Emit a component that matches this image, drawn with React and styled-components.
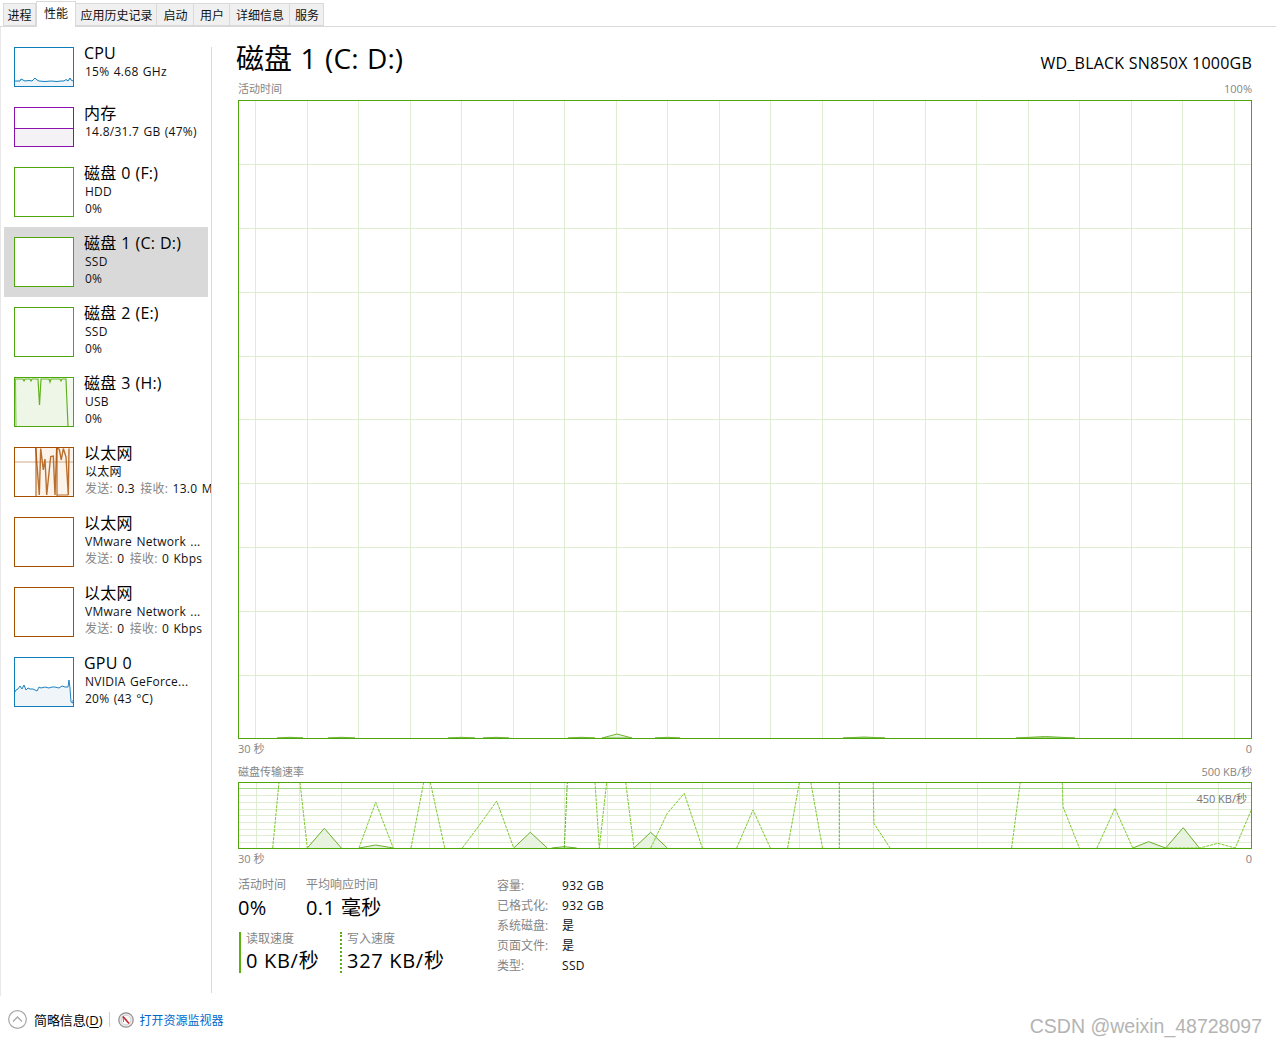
import React from 'react';
import styled, { createGlobalStyle } from 'styled-components';

const FONT = '"Open Sans", "Noto Sans CJK SC", sans-serif';

const Global = createGlobalStyle`
  html, body { margin: 0; padding: 0; background: #fff; }
  body { font-family: ${FONT}; color: #000; }
  * { box-sizing: border-box; }
`;

const Page = styled.div`
  position: relative;
  width: 1276px;
  height: 1045px;
  display: flex;
  flex-direction: column;
  overflow: hidden;
  background: #fff;
`;

const TabBar = styled.div`
  height: 27px;
  flex: none;
  display: flex;
  align-items: flex-end;
  padding-left: 3px;
  border-bottom: 1px solid #d9d9d9;
`;

const Tab = styled.div`
  width: ${p => p.$w}px;
  height: ${p => (p.$active ? 26 : 23)}px;
  margin-bottom: ${p => (p.$active ? -1 : 0)}px;
  padding-bottom: ${p => (p.$active ? 4 : 0)}px;
  padding-left: ${p => (p.$first || p.$active ? 0 : 1)}px;
  display: flex;
  align-items: center;
  justify-content: center;
  font-size: 12px;
  color: #111;
  white-space: nowrap;
  background: ${p => (p.$active ? '#fff' : '#f0f0f0')};
  border: 1px solid #d9d9d9;
  border-left-width: ${p => (p.$first || p.$active ? 1 : 0)}px;
  border-bottom-width: ${p => (p.$active ? 0 : 1)}px;
`;

const Body = styled.div`
  height: 969px;
  flex: none;
  display: flex;
  border-left: 1px solid #e8e8e8;
`;

const SideList = styled.div`
  width: 210px;
  flex: none;
  padding: 10px 0 0 3px;
  overflow: hidden;
`;

const SideItem = styled.div`
  width: 204px;
  height: ${p => (p.$short ? 60 : 70)}px;
  padding: 10px 0 0 10px;
  display: flex;
  gap: 10px;
  background: ${p => (p.$selected ? '#d9d9d9' : 'transparent')};
`;

const ThumbFrame = styled.div`
  width: 60px;
  height: ${p => (p.$short ? 40 : 50)}px;
  flex: none;
  border: 1px solid ${p => p.$color};
  background: #fff;
`;

const Svg = styled.svg`
  display: block;
  width: 100%;
  height: 100%;
`;

const SideText = styled.div`
  margin-top: -4px;
  min-width: 0;
  white-space: nowrap;
`;

const SideTitle = styled.div`
  font-size: 16px;
  line-height: 20px;
  letter-spacing: 0.2px;
  word-spacing: 0.5px;
  color: #000;
`;

const SideSub = styled.div`
  font-size: 12px;
  line-height: 17px;
  padding-left: 1px;
  letter-spacing: 0.25px;
  word-spacing: 1px;
  color: #111;
`;

const Muted = styled.span`
  color: #858585;
`;

const NetRecv = styled(Muted)`
  margin-left: 1px;
`;

const Divider = styled.div`
  width: 1px;
  height: 946px;
  margin-top: 20px;
  flex: none;
  background: #d9d9d9;
`;

const Main = styled.div`
  flex: 1;
  min-width: 0;
  padding: 15px 24px 0 26px;
  display: flex;
  flex-direction: column;
`;

const HeadRow = styled.div`
  height: 32px;
  display: flex;
  justify-content: space-between;
  align-items: flex-end;
`;

const BigTitle = styled.div`
  margin-left: -2px;
  font-size: 28px;
  line-height: 32px;
  letter-spacing: 0.1px;
  word-spacing: 1px;
  color: #000;
  white-space: nowrap;
`;

const Model = styled.div`
  font-size: 16px;
  line-height: 24px;
  margin-bottom: -1px;
  letter-spacing: 0.23px;
  color: #000;
`;

const CaptionRow = styled.div`
  height: ${p => p.$h || 16}px;
  margin-top: ${p => p.$top}px;
  display: flex;
  justify-content: space-between;
  align-items: center;
  font-size: 11px;
  color: #858585;
  white-space: nowrap;
`;

const ChartFrame = styled.div`
  position: relative;
  height: ${p => p.$h}px;
  margin-top: ${p => p.$top}px;
  border: 1px solid #4da60c;
`;

const ScaleTag = styled.div`
  position: absolute;
  top: 9px;
  right: 4px;
  font-size: 11px;
  line-height: 14px;
  color: #777;
`;

const Stats = styled.div`
  margin-top: 10px;
  display: flex;
`;

const StatCol = styled.div`
  width: 259px;
  flex: none;
  padding-top: 3px;
`;

const StatRow = styled.div`
  display: flex;
`;

const Stat = styled.div`
  width: ${p => p.$w}px;
  flex: none;
`;

const StatLabel = styled.div`
  font-size: 12px;
  line-height: 14px;
  color: #858585;
  white-space: nowrap;
`;

const StatValue = styled.div`
  margin-top: 2px;
  font-size: 20px;
  line-height: 28px;
  letter-spacing: 0.4px;
  color: #000;
  white-space: nowrap;
`;

const SpeedRow = styled.div`
  display: flex;
  margin: 10px 0 0 1px;
`;

const Speed = styled.div`
  width: ${p => p.$w}px;
  height: 41px;
  flex: none;
  padding-left: 5px;
  border-left: 2px ${p => p.$style} #5cb010;
`;

const SpeedValue = styled(StatValue)`
  margin-top: 2px;
  line-height: 26px;
  letter-spacing: 0.7px;
`;

const Facts = styled.div`
  display: grid;
  grid-template-columns: 65px auto;
  grid-auto-rows: 20px;
  align-items: center;
  font-size: 12px;
  letter-spacing: 0.3px;
  white-space: nowrap;
`;

const FactLabel = styled(Muted)`
  letter-spacing: 0;
`;

const FactValue = styled.div`
  color: #111;
`;

const Footer = styled.div`
  flex: 1;
  display: flex;
  align-items: center;
  padding: 0 0 2px 8px;
  font-size: 12px;
`;

const FooterIcon = styled.svg`
  display: block;
  flex: none;
`;

const FooterLabel = styled.div`
  margin-left: 7px;
  font-size: 13px;
  color: #000;
  letter-spacing: -0.1px;
  white-space: nowrap;
  u { text-underline-offset: 2px; }
`;

const FooterSep = styled.div`
  width: 1px;
  height: 15px;
  margin: 0 8px 0 7px;
  background: #cfcfcf;
`;

const FooterLink = styled.div`
  margin-left: 5px;
  color: #0066cc;
  white-space: nowrap;
`;

const Watermark = styled.div`
  position: absolute;
  right: 14px;
  bottom: 7px;
  font-family: "Liberation Sans", sans-serif;
  font-size: 19.5px;
  line-height: 24px;
  color: #b4b4b4;
`;

const GRID = '#dfeed3';
const DISK = '#4da60c';
const DASH = '#7cc92c';

function ThumbArt({ kind }) {
  if (kind === 'cpu') {
    return (
      <Svg viewBox="0 0 58 38" preserveAspectRatio="none">
        <polygon fill="#eef5fa" points="0,38 0,33 5,33 6,31 8,32 10,33 14,32.5 17,33 20,30 22,32 24,33 30,33.5 36,33 42,33.5 46,33 49,33 51,31.5 53,33 55,30 56,32 58,33 58,38" />
        <polyline fill="none" stroke="#117dbb" strokeWidth="1" points="0,33 5,33 6,31 8,32 10,33 14,32.5 17,33 20,30 22,32 24,33 30,33.5 36,33 42,33.5 46,33 49,33 51,31.5 53,33 55,30 56,32 58,33" />
      </Svg>
    );
  }
  if (kind === 'mem') {
    return (
      <Svg viewBox="0 0 58 38" preserveAspectRatio="none">
        <rect x="0" y="20.5" width="58" height="18" fill="#f4f2f4" />
        <line x1="0" x2="58" y1="20.5" y2="20.5" stroke="#8b12ae" strokeWidth="1" />
      </Svg>
    );
  }
  if (kind === 'usb') {
    const pts = '0,1 8,1 9,3 10,1 15,1 16,3 17,1 23,1 24.5,27 26,1 34,1 35,4 36,1 45,1 46,3 47,1 51,1 53,48';
    return (
      <Svg viewBox="0 0 58 48" preserveAspectRatio="none">
        <polygon fill="#eef6e8" points={`0,48 ${pts} 58,48`} />
        <polygon fill="#f2f8ed" points="53,48 53,1 58,1 58,48" />
        <polyline fill="none" stroke="#5fb31e" strokeWidth="1.2" points={pts} />
        <line x1="0.5" x2="1" y1="1" y2="48" stroke="#7fc24c" strokeWidth="1" />
      </Svg>
    );
  }
  if (kind === 'net') {
    const pts = '20.7,0 24.3,47 25.7,0.5 28.3,22 30,11 31.7,47 34.3,22 35.7,8.5 38.3,8 40,47 41.7,0 42.3,0 44.3,1.5 46.3,12 48.3,0.5 51,9 53.3,47 54,0.5';
    return (
      <Svg viewBox="0 0 58 48" preserveAspectRatio="none">
        <rect x="21" y="0" width="37" height="48" fill="#fcf3eb" />
        <line x1="0" x2="58" y1="14" y2="14" stroke="#d2a882" strokeWidth="1" />
        <polyline fill="none" stroke="#b96f2e" strokeWidth="1.4" points={pts} />
        <polyline fill="none" stroke="#b96f2e" strokeWidth="1" points="42.3,47 53.3,47" />
        <line x1="21" x2="21" y1="0" y2="48" stroke="#a74f01" strokeWidth="1" />
        <line x1="42" x2="42" y1="0" y2="48" stroke="#a74f01" strokeWidth="1" />
      </Svg>
    );
  }
  if (kind === 'gpu') {
    const pts = '0,34 1,32 3,31 5,28 7,31 9,27 11,32 13,30 15,31 18,31 20,32 22,33 24,29 26,30 30,29 34,30 37,29 40,29 44,30 47,28 50,29 53,29 54,22 55,30 56,44 58,45 58,42';
    return (
      <Svg viewBox="0 0 58 48" preserveAspectRatio="none">
        <polygon fill="#f0f5fa" points={`0,48 ${pts} 58,48`} />
        <polyline fill="none" stroke="#1f82c0" strokeWidth="1" points={pts} />
      </Svg>
    );
  }
  return null;
}

const items = [
  { title: 'CPU', lines: ['15%  4.68 GHz'], color: '#117dbb', art: 'cpu', short: true },
  { title: '内存', lines: ['14.8/31.7 GB (47%)'], color: '#8b12ae', art: 'mem', short: true },
  { title: '磁盘 0 (F:)', lines: ['HDD', '0%'], color: DISK },
  { title: '磁盘 1 (C: D:)', lines: ['SSD', '0%'], color: DISK, selected: true },
  { title: '磁盘 2 (E:)', lines: ['SSD', '0%'], color: DISK },
  { title: '磁盘 3 (H:)', lines: ['USB', '0%'], color: DISK, art: 'usb' },
  { title: '以太网', lines: ['以太网', ['发送:', ' 0.3 ', '接收:', ' 13.0 Mbps']], color: '#a74f01', art: 'net' },
  { title: '以太网', lines: ['VMware Network ...', ['发送:', ' 0 ', '接收:', ' 0 Kbps']], color: '#a74f01' },
  { title: '以太网', lines: ['VMware Network ...', ['发送:', ' 0 ', '接收:', ' 0 Kbps']], color: '#a74f01' },
  { title: 'GPU 0', lines: ['NVIDIA GeForce...', '20%  (43 °C)'], color: '#117dbb', art: 'gpu' },
];

const tabs = [
  ['进程', 33], ['性能', 40], ['应用历史记录', 81], ['启动', 37], ['用户', 36], ['详细信息', 60], ['服务', 34],
];

const topV = [255, 307, 358, 410, 461, 513, 564, 616, 667, 719, 770, 822, 873, 925, 976, 1028, 1079, 1131, 1182, 1234];
const topH = [164, 228, 292, 356, 419, 483, 547, 611, 675];
const topBumps = [
  [277, 303, 737.3], [328, 355, 737.3], [448, 475, 737.3], [483, 509, 737.3],
  [568, 595, 737.3], [602, 632, 734], [655, 680, 737.3], [843, 885, 737], [1016, 1075, 736.5],
];

const z3 = pts => pts.map(([x, y]) => `${(230 + x / 3).toFixed(1)},${(725 + y / 3).toFixed(1)}`).join(' ');
const z4 = pts => pts.map(([x, y]) => `${(750 + x / 2.978).toFixed(1)},${(725 + y / 3).toFixed(1)}`).join(' ');

const lowV = [256, 299, 341, 393, 429, 478, 530, 564, 607, 650, 702, 753, 799, 873, 926, 977, 1062, 1115, 1166, 1218];
const lowH = [795.7, 802.3, 809, 815.7, 822.3, 829, 835.7, 842.3];

const dashed = [
  z3([[128, 369], [147, 172]]),
  z3([[210, 172], [232, 369]]),
  z3([[387, 369], [437, 232], [490, 369]]),
  z3([[543, 369], [581, 172]]),
  z3([[601, 172], [644, 369]]),
  z3([[697, 369], [745, 305], [800, 228], [851, 369]]),
  z3([[1095, 172], [1108, 369], [1130, 172]]),
  z3([[1187, 172], [1212, 369]]),
  z3([[1262, 369], [1312, 265], [1363, 205], [1417, 369]]),
  z3([[1520, 369], [1569, 255], [1621, 369]]),
  z4([[112, 369], [147, 172]]),
  z4([[181, 172], [216, 369]]),
  z4([[367, 172], [369, 295], [417, 369]]),
  z4([[779, 369], [805, 172]]),
  z4([[930, 172], [932, 245], [981, 369]]),
  z4([[1033, 369], [1087, 250], [1140, 369]]),
  z4([[1240, 369], [1340, 369], [1393, 355], [1445, 369], [1495, 250]]),
];
const dashedDark = [
  z3([[1003, 369], [1012, 172]]),
  z4([[266, 172], [266, 369]]),
];
const solid = [
  z3([[232, 369], [283, 310], [334, 369]]),
  z3([[387, 369], [437, 360], [490, 369]]),
  z3([[851, 369], [901, 322], [952, 369]]),
  z3([[965, 369], [1003, 365], [1040, 369]]),
  z3([[1212, 369], [1262, 322], [1312, 369]]),
  z4([[1140, 369], [1187, 350], [1238, 369], [1290, 308], [1338, 369]]),
];

function TopChart() {
  return (
    <Svg viewBox="239 101 1012 637" preserveAspectRatio="none">
      {topV.map(x => <line key={x} x1={x + 0.5} x2={x + 0.5} y1="101" y2="738" stroke={GRID} strokeWidth="1" shapeRendering="crispEdges" />)}
      {topH.map(y => <line key={y} x1="239" x2="1251" y1={y + 0.5} y2={y + 0.5} stroke={GRID} strokeWidth="1" shapeRendering="crispEdges" />)}
      {topBumps.map(([a, b, t]) => (
        <polygon key={a} points={`${a},738 ${(a + b) / 2},${t} ${b},738`} fill="#e8f3df" stroke="#6db52f" strokeWidth="1" />
      ))}
    </Svg>
  );
}

function LowChart() {
  return (
    <Svg viewBox="239 783 1012 65" preserveAspectRatio="none">
      {lowV.map(x => <line key={x} x1={x + 0.5} x2={x + 0.5} y1="783" y2="848" stroke={GRID} strokeWidth="1" shapeRendering="crispEdges" />)}
      {lowH.map(y => <line key={y} x1="239" x2="1251" y1={y} y2={y} stroke={GRID} strokeWidth="1" shapeRendering="crispEdges" />)}
      <line x1="239" x2="1251" y1="788.5" y2="788.5" stroke="#a6d68a" strokeWidth="1" shapeRendering="crispEdges" />
      {solid.map(p => <polygon key={p} points={p} fill="#e8f3df" stroke="none" />)}
      {solid.map(p => <polyline key={p} points={p} fill="none" stroke="#69b02c" strokeWidth="1" />)}
      {dashed.map(p => <polyline key={p} points={p} fill="none" stroke={DASH} strokeWidth="1" strokeDasharray="3 1" />)}
      {dashedDark.map(p => <polyline key={p} points={p} fill="none" stroke="#5fb31e" strokeWidth="1" strokeDasharray="3 1" />)}
    </Svg>
  );
}

const facts = [
  ['容量:', '932 GB'], ['已格式化:', '932 GB'], ['系统磁盘:', '是'], ['页面文件:', '是'], ['类型:', 'SSD'],
];

export default function App() {
  return (
    <Page>
      <Global />
      <TabBar>
        {tabs.map(([t, w], i) => (
          <Tab key={t} $w={w} $first={i === 0} $active={t === '性能'}>{t}</Tab>
        ))}
      </TabBar>
      <Body>
        <SideList>
          {items.map((it, i) => (
            <SideItem key={i} $short={it.short} $selected={it.selected}>
              <ThumbFrame $short={it.short} $color={it.color}>
                <ThumbArt kind={it.art} />
              </ThumbFrame>
              <SideText>
                <SideTitle>{it.title}</SideTitle>
                {it.lines.map((l, j) => (
                  <SideSub key={j}>
                    {Array.isArray(l)
                      ? <><Muted>{l[0]}</Muted>{l[1]} <NetRecv>{l[2]}</NetRecv>{l[3]}</>
                      : l}
                  </SideSub>
                ))}
              </SideText>
            </SideItem>
          ))}
        </SideList>
        <Divider />
        <Main>
          <HeadRow>
            <BigTitle>磁盘 1 (C: D:)</BigTitle>
            <Model>WD_BLACK SN850X 1000GB</Model>
          </HeadRow>
          <CaptionRow $top={6}><span>活动时间</span><span>100%</span></CaptionRow>
          <ChartFrame $top={4} $h={639}><TopChart /></ChartFrame>
          <CaptionRow $top={2} $h={14}><span>30 秒</span><span>0</span></CaptionRow>
          <CaptionRow $top={9} $h={14}><span>磁盘传输速率</span><span>500 KB/秒</span></CaptionRow>
          <ChartFrame $top={4} $h={67}>
            <LowChart />
            <ScaleTag>450 KB/秒</ScaleTag>
          </ChartFrame>
          <CaptionRow $top={2} $h={14}><span>30 秒</span><span>0</span></CaptionRow>
          <Stats>
            <StatCol>
              <StatRow>
                <Stat $w={68}><StatLabel>活动时间</StatLabel><StatValue>0%</StatValue></Stat>
                <Stat $w={150}><StatLabel>平均响应时间</StatLabel><StatValue>0.1 毫秒</StatValue></Stat>
              </StatRow>
              <SpeedRow>
                <Speed $w={101} $style="solid">
                  <StatLabel>读取速度</StatLabel>
                  <SpeedValue>0 KB/秒</SpeedValue>
                </Speed>
                <Speed $w={120} $style="dotted">
                  <StatLabel>写入速度</StatLabel>
                  <SpeedValue>327 KB/秒</SpeedValue>
                </Speed>
              </SpeedRow>
            </StatCol>
            <Facts>
              {facts.map(([k, v]) => (
                <React.Fragment key={k}>
                  <FactLabel>{k}</FactLabel>
                  <FactValue>{v}</FactValue>
                </React.Fragment>
              ))}
            </Facts>
          </Stats>
        </Main>
      </Body>
      <Footer>
        <FooterIcon width="19" height="19" viewBox="0 0 19 19">
          <circle cx="9.5" cy="9.5" r="8.8" fill="#fff" stroke="#a8a8a8" strokeWidth="1.2" />
          <polyline points="5,11.5 9.5,7 14,11.5" fill="none" stroke="#a8a8a8" strokeWidth="1.3" />
        </FooterIcon>
        <FooterLabel>简略信息(<u>D</u>)</FooterLabel>
        <FooterSep />
        <FooterIcon width="16" height="16" viewBox="0 0 16 16">
          <circle cx="8" cy="8" r="7.2" fill="#eceae6" stroke="#8f8f8f" strokeWidth="1.2" />
          <circle cx="8" cy="8" r="4.8" fill="#fff" stroke="#c9c9c9" strokeWidth="0.8" />
          <line x1="5" y1="4.5" x2="11" y2="11.5" stroke="#c8202a" strokeWidth="1.6" />
          <line x1="5" y1="4.5" x2="5.5" y2="10" stroke="#555" strokeWidth="0.8" />
        </FooterIcon>
        <FooterLink>打开资源监视器</FooterLink>
      </Footer>
      <Watermark>CSDN @weixin_48728097</Watermark>
    </Page>
  );
}
